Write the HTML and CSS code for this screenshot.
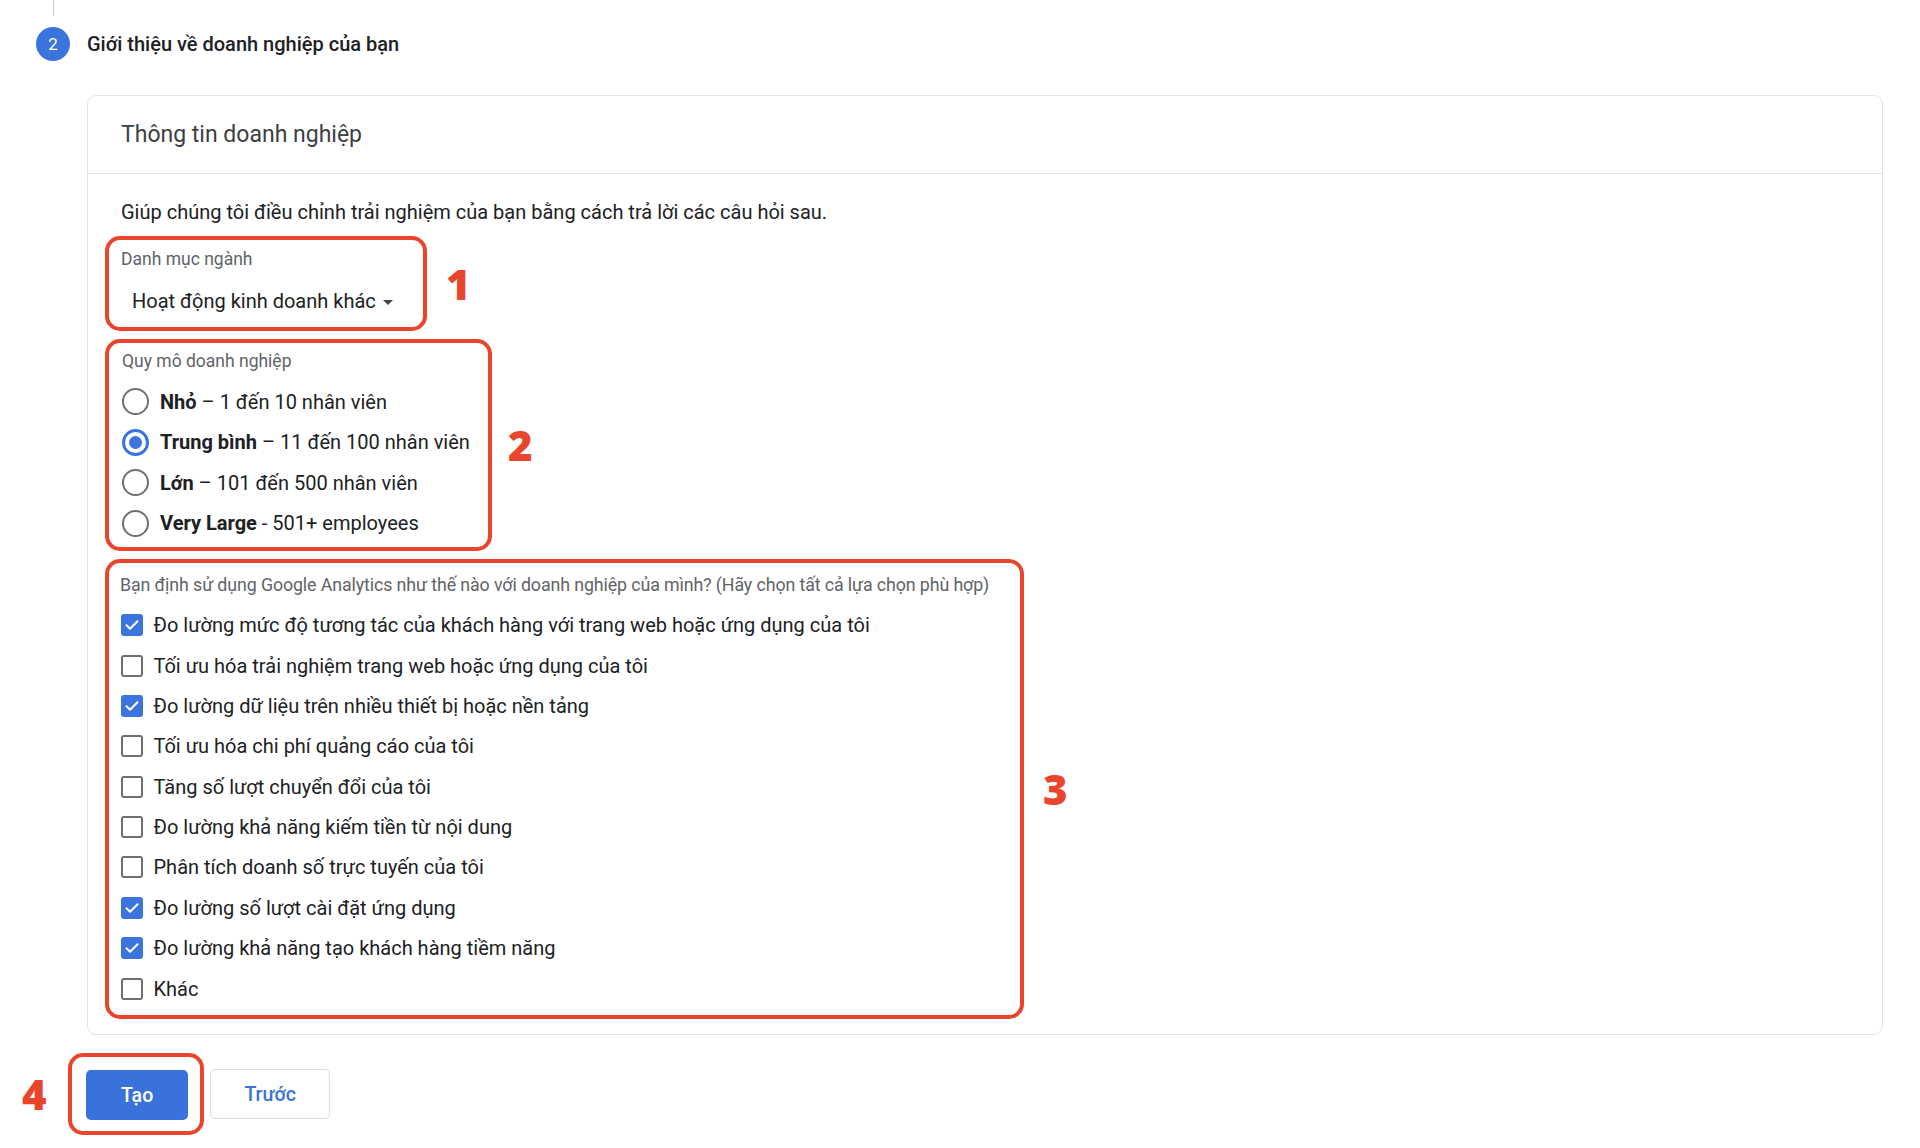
FILE: index.html
```html
<!DOCTYPE html>
<html lang="vi">
<head>
<meta charset="utf-8">
<title>Giới thiệu về doanh nghiệp của bạn</title>
<link rel="stylesheet" href="styles.css">
</head>
<body>
<div class="page">
  <div class="step-line"></div>
  <div class="step-head">
    <span class="step-num">2</span>
    <span class="step-title">Giới thiệu về doanh nghiệp của bạn</span>
  </div>

  <section class="card">
    <header class="card-head">Thông tin doanh nghiệp</header>
    <div class="card-body">
      <p class="intro">Giúp chúng tôi điều chỉnh trải nghiệm của bạn bằng cách trả lời các câu hỏi sau.</p>

      <div class="anno-row">
        <div class="mark mark-1">
          <div class="field-label">Danh mục ngành</div>
          <div class="select">Hoạt động kinh doanh khác<span class="caret"></span></div>
        </div>
        <span class="anno-num num-1">1</span>
      </div>

      <div class="anno-row">
        <div class="mark mark-2">
          <div class="field-label">Quy mô doanh nghiệp</div>
          <div class="radio-row"><span class="radio"></span><span class="opt"><b>Nhỏ</b> – 1 đến 10 nhân viên</span></div>
          <div class="radio-row"><span class="radio on"></span><span class="opt"><b>Trung bình</b> – 11 đến 100 nhân viên</span></div>
          <div class="radio-row"><span class="radio"></span><span class="opt"><b>Lớn</b> – 101 đến 500 nhân viên</span></div>
          <div class="radio-row"><span class="radio"></span><span class="opt"><b>Very Large</b> - 501+ employees</span></div>
        </div>
        <span class="anno-num num-2">2</span>
      </div>

      <div class="anno-row">
        <div class="mark mark-3">
          <div class="field-label small">Bạn định sử dụng Google Analytics như thế nào với doanh nghiệp của mình? (Hãy chọn tất cả lựa chọn phù hợp)</div>
          <div class="check-row"><span class="check on"><svg viewBox="0 0 22 22"><path d="M5.5 11.2l3.6 3.6 7.4-7.6"/></svg></span><span class="opt">Đo lường mức độ tương tác của khách hàng với trang web hoặc ứng dụng của tôi</span></div>
          <div class="check-row"><span class="check"></span><span class="opt">Tối ưu hóa trải nghiệm trang web hoặc ứng dụng của tôi</span></div>
          <div class="check-row"><span class="check on"><svg viewBox="0 0 22 22"><path d="M5.5 11.2l3.6 3.6 7.4-7.6"/></svg></span><span class="opt">Đo lường dữ liệu trên nhiều thiết bị hoặc nền tảng</span></div>
          <div class="check-row"><span class="check"></span><span class="opt">Tối ưu hóa chi phí quảng cáo của tôi</span></div>
          <div class="check-row"><span class="check"></span><span class="opt">Tăng số lượt chuyển đổi của tôi</span></div>
          <div class="check-row"><span class="check"></span><span class="opt">Đo lường khả năng kiếm tiền từ nội dung</span></div>
          <div class="check-row"><span class="check"></span><span class="opt">Phân tích doanh số trực tuyến của tôi</span></div>
          <div class="check-row"><span class="check on"><svg viewBox="0 0 22 22"><path d="M5.5 11.2l3.6 3.6 7.4-7.6"/></svg></span><span class="opt">Đo lường số lượt cài đặt ứng dụng</span></div>
          <div class="check-row"><span class="check on"><svg viewBox="0 0 22 22"><path d="M5.5 11.2l3.6 3.6 7.4-7.6"/></svg></span><span class="opt">Đo lường khả năng tạo khách hàng tiềm năng</span></div>
          <div class="check-row"><span class="check"></span><span class="opt">Khác</span></div>
        </div>
        <span class="anno-num num-3">3</span>
      </div>
    </div>
  </section>

  <div class="actions">
    <span class="anno-num num-4">4</span>
    <div class="mark mark-4"><button class="btn btn-primary">Tạo</button></div>
    <button class="btn btn-outline">Trước</button>
  </div>
</div>
</body>
</html>
```

FILE: styles.css
```css
* { box-sizing: border-box; }
html, body { margin: 0; padding: 0; background: #ffffff; }
body {
  font-family: Roboto, "Noto Sans", "Liberation Sans", sans-serif;
  color: #202124;
  width: 1920px;
  height: 1148px;
  overflow: hidden;
}
.page { display: flex; flex-direction: column; }

.step-line {
  width: 1px;
  height: 16px;
  margin-left: 53px;
  background: #c8c8c8;
}
.step-head {
  display: flex;
  align-items: center;
  gap: 17px;
  margin-top: 11px;
  margin-left: 36px;
  height: 34px;
}
.step-num {
  width: 34px;
  height: 34px;
  border-radius: 50%;
  background: #3a74dc;
  color: #fff;
  font-size: 17px;
  display: flex;
  align-items: center;
  justify-content: center;
}
.step-title {
  font-size: 20px;
  font-weight: 500;
  color: #202124;
}

.card {
  margin: 34px 37px 0 87px;
  border: 1px solid #e3e3e3;
  border-radius: 9px;
  background: #fff;
}
.card-head {
  height: 78px;
  border-bottom: 1px solid #e3e3e3;
  display: flex;
  align-items: center;
  padding-left: 33px;
  font-size: 23px;
  color: #3c4043;
}
.card-body {
  padding: 26px 0 15px 17px;
  display: flex;
  flex-direction: column;
}
.intro {
  margin: 0 0 11.8px 16px;
  font-size: 20px;
  line-height: 24px;
  color: #202124;
}

.anno-row {
  display: flex;
  align-items: center;
  gap: 19px;
}
.anno-row + .anno-row { margin-top: 7.6px; }

.mark {
  border: 4px solid #e8452c;
  border-radius: 15px;
}
.mark-1 { width: 322px; height: 95.6px; padding: 9.4px 0 0 12px; }
.mark-2 { width: 387px; height: 212.2px; padding: 8.5px 0 0 13px; }
.mark-3 { width: 919px; height: 460.4px; padding: 12.7px 0 0 11px; }

.anno-num {
  font-family: "Open Sans", "DejaVu Sans", sans-serif;
  font-weight: 800;
  font-size: 42px;
  line-height: 42px;
  color: #e8452c;
}
.num-2 { margin-left: -3px; }

.field-label {
  font-size: 17.5px;
  line-height: 20px;
  color: #5f6368;
}
.field-label.small { font-size: 17.8px; letter-spacing: -0.1px; }

.select {
  margin-top: 18px;
  padding-left: 11px;
  font-size: 20px;
  line-height: 28px;
  color: #202124;
  display: flex;
  align-items: center;
}
.caret {
  width: 0;
  height: 0;
  margin-left: 7px;
  margin-top: 2px;
  border-left: 5px solid transparent;
  border-right: 5px solid transparent;
  border-top: 5px solid #444746;
}

.radio-row {
  height: 40.5px;
  display: flex;
  align-items: center;
}
.field-label + .radio-row { margin-top: 10px; }
.radio {
  width: 27px;
  height: 27px;
  border-radius: 50%;
  border: 2.5px solid #6f6f6f;
  margin-right: 11px;
  display: flex;
  align-items: center;
  justify-content: center;
  flex: none;
}
.radio.on { border-color: #3a74dc; border-width: 3px; }
.radio.on::after {
  content: "";
  width: 13px;
  height: 13px;
  border-radius: 50%;
  background: #3a74dc;
}
.opt {
  font-size: 20px;
  color: #202124;
}
.opt b { font-weight: 700; }

.field-label + .check-row { margin-top: 9.5px; }
.check-row {
  height: 40.4px;
  display: flex;
  align-items: center;
}
.check {
  width: 22px;
  height: 22px;
  border: 2.5px solid #6f6f6f;
  border-radius: 3px;
  margin-left: 0.5px;
  margin-right: 11px;
  flex: none;
  display: flex;
}
.check.on {
  background: #3a74dc;
  border: none;
}
.check svg { width: 22px; height: 22px; }
.check path {
  fill: none;
  stroke: #fff;
  stroke-width: 2;
  stroke-linecap: round;
  stroke-linejoin: round;
}

.actions {
  display: flex;
  align-items: center;
  margin-top: 18.2px;
  padding-left: 22px;
}
.num-4 { margin-right: 21.5px; }
.mark-4 {
  width: 136px;
  height: 82px;
  padding: 13px 12px 11px 14px;
  margin-right: 6px;
}
.btn {
  font-family: Roboto, "Noto Sans", sans-serif;
  font-size: 19.5px;
  font-weight: 500;
  height: 50px;
  border-radius: 5px;
  cursor: pointer;
}
.btn-primary {
  width: 102px;
  background: #3a72dc;
  color: #fff;
  border: none;
}
.btn-outline {
  width: 120px;
  background: #fff;
  color: #3a72dc;
  border: 1px solid #dadce0;
}
```
